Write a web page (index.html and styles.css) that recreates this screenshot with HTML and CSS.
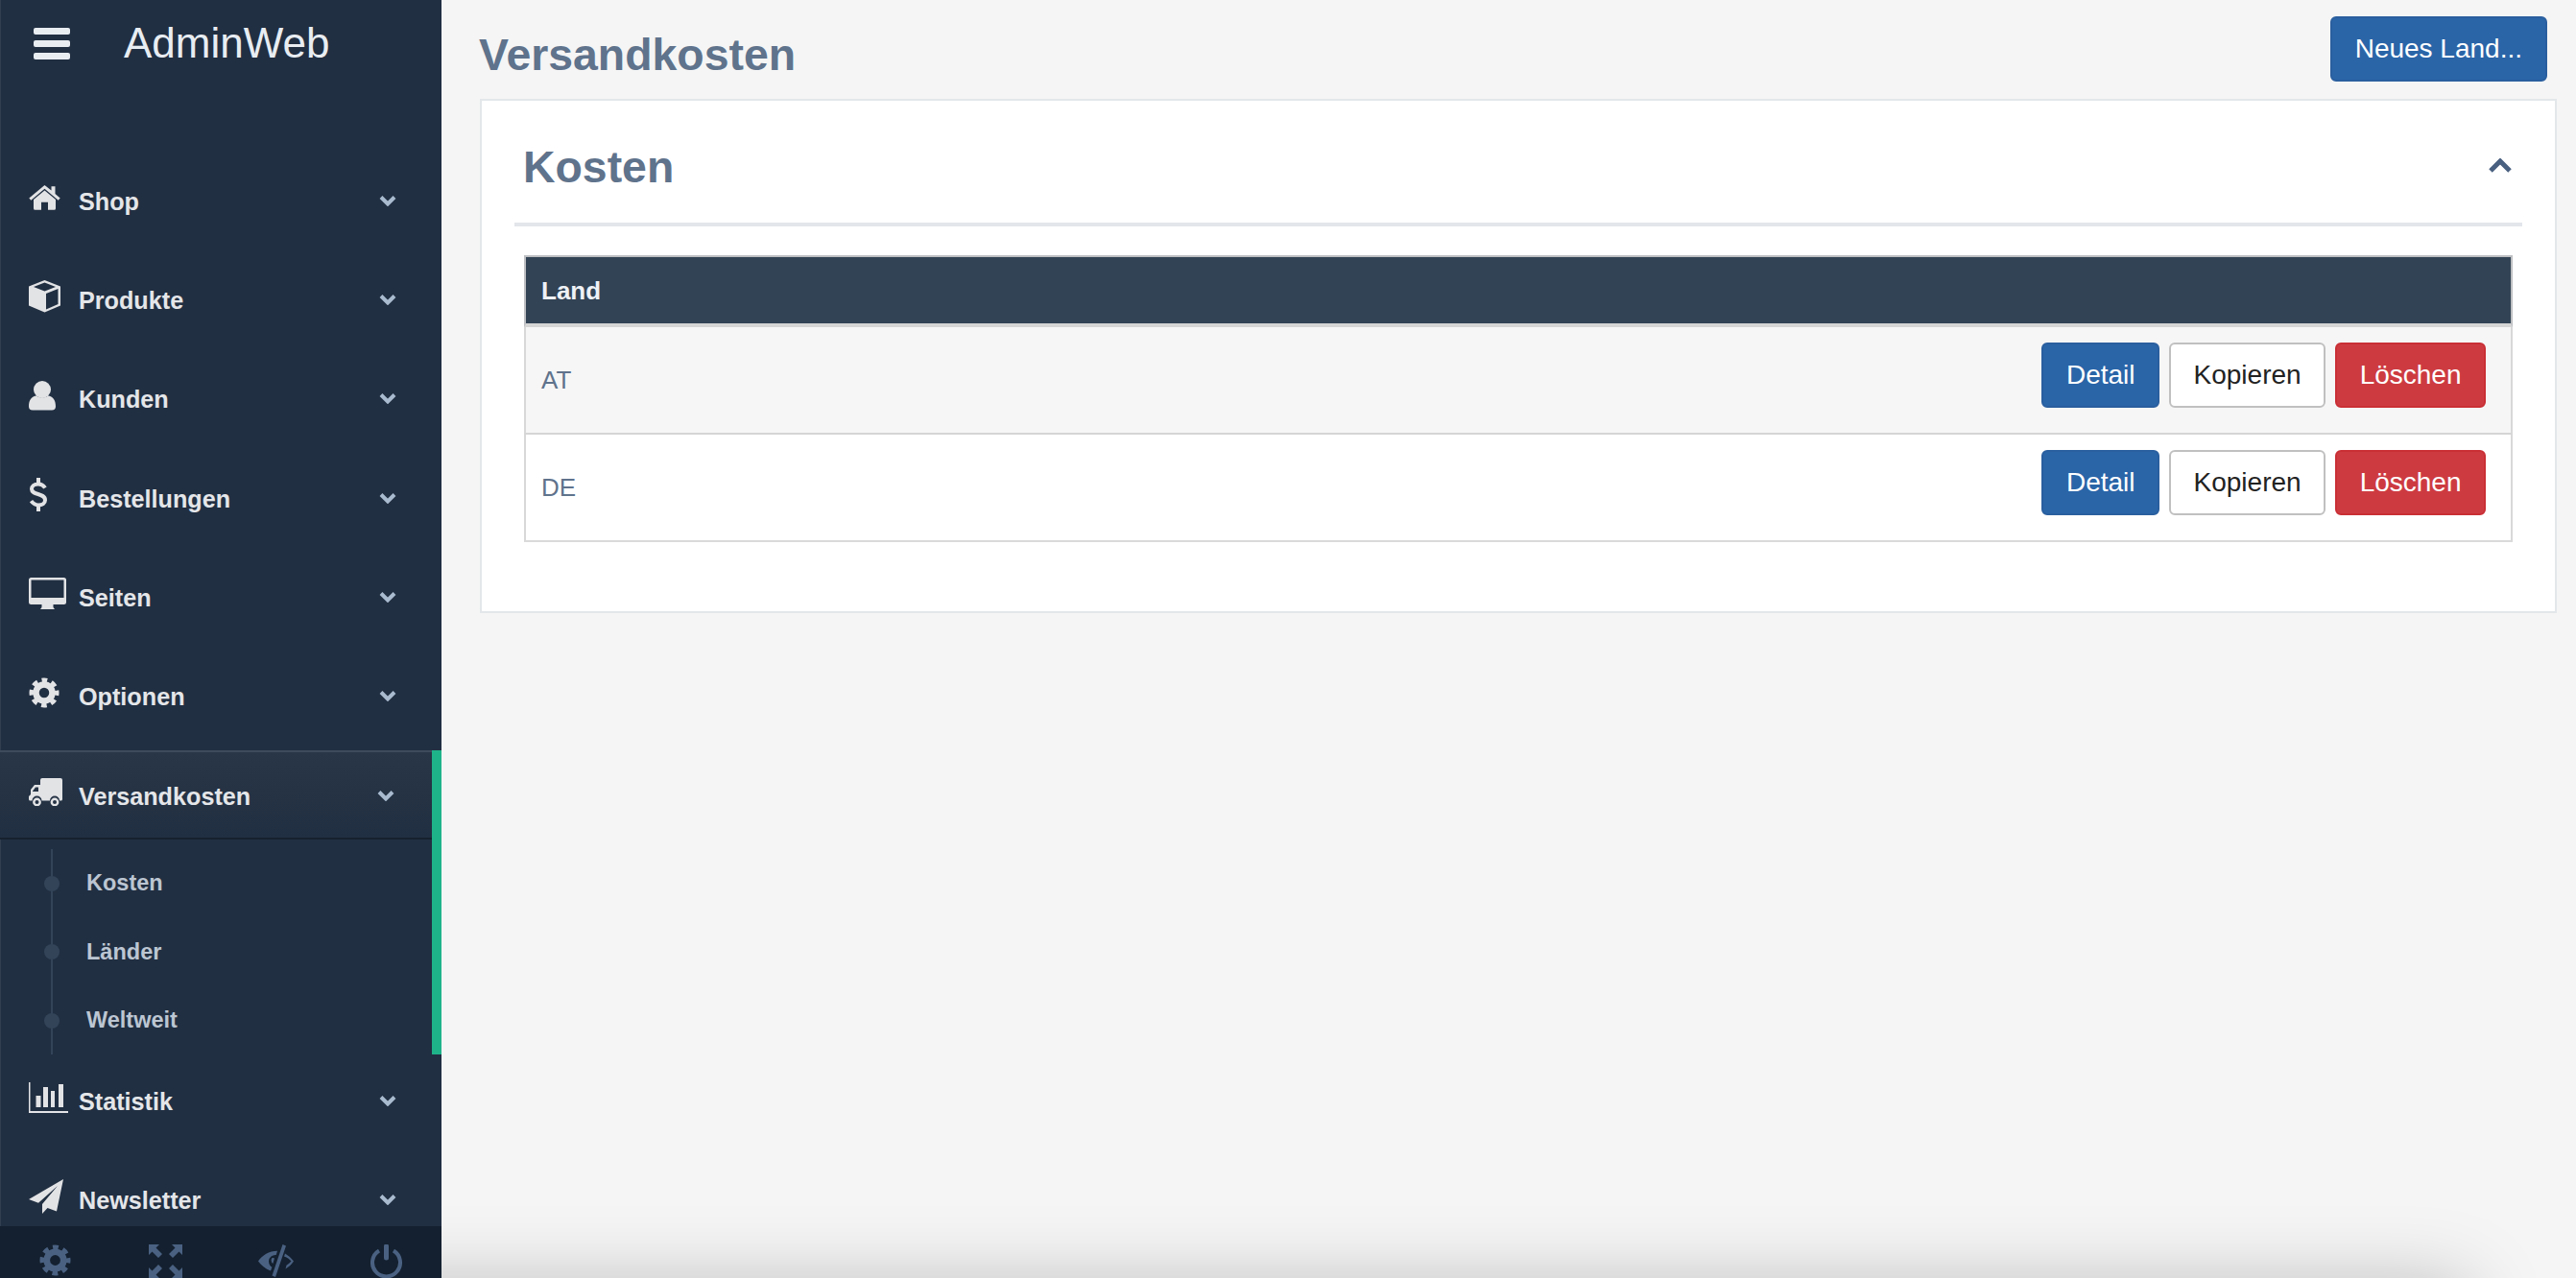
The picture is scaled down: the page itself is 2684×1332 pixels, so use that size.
FILE: index.html
```html
<!DOCTYPE html>
<html lang="de">
<head>
<meta charset="utf-8">
<title>AdminWeb - Versandkosten</title>
<link rel="stylesheet" href="styles.css">
</head>
<body>
<svg class="defs" width="0" height="0" aria-hidden="true">
  <symbol id="gear" viewBox="0 0 32 32">
    <circle class="gear-ring" cx="16" cy="16" r="8.5"/>
    <circle class="gear-teeth" cx="16" cy="16" r="13"/>
  </symbol>
  <symbol id="chev" viewBox="0 0 18 12">
    <path class="chev-line" d="M2 2.5 9 9.500 16 2.500"/>
  </symbol>
</svg>
<div class="app">
  <aside class="sidebar">
    <div class="brand">
      <div class="burger"><span></span><span></span><span></span></div>
      <div class="brand-name">AdminWeb</div>
    </div>
    <nav class="nav">
      <a class="item">
        <span class="ico"><svg width="33" height="26" viewBox="0 0 33 26"><path d="M16.5 5.5 5 15v9.2a1.5 1.5 0 0 0 1.5 1.5H13v-8h7v8h6.5a1.5 1.5 0 0 0 1.5-1.5V15Z"/><path d="M16.5 0 .3 13.5l2 2.2L16.5 3.8l14.2 11.9 2-2.2L27.5 9V1.2h-4v4.4Z"/></svg></span>
        <span class="label">Shop</span>
        <svg class="chev" width="18" height="12"><use href="#chev"/></svg>
      </a>
      <a class="item">
        <span class="ico"><svg width="33" height="34" viewBox="0 0 33 34"><path fill-rule="evenodd" d="M16.5 0 33 6.5v20L16.5 33.6 0 26.5v-20ZM16.5 2.6 5 7l11.5 4.5L28 7ZM18 14v16.5l12.5-5.4V9Z"/></svg></span>
        <span class="label">Produkte</span>
        <svg class="chev" width="18" height="12"><use href="#chev"/></svg>
      </a>
      <a class="item">
        <span class="ico"><svg width="28" height="31" viewBox="0 0 28 31"><circle cx="14" cy="9" r="9"/><path d="M0 26.5C0 20 3 16 8 15.500c2 2.500 10 2.500 12 0 5 .5 8 4.500 8 11a4 4 0 0 1-4 4H4a4 4 0 0 1-4-4Z"/></svg></span>
        <span class="label">Kunden</span>
        <svg class="chev" width="18" height="12"><use href="#chev"/></svg>
      </a>
      <a class="item">
        <span class="ico"><svg width="20" height="37" viewBox="0 0 20 37"><path class="dollar" d="M17 11.500C15 8.500 12.500 7.500 10 7.500 5.500 7.500 3 10 3 12.800 3 19.500 17 16.500 17 24.200 17 27.500 14 29.500 10 29.500 7 29.500 4.500 28 2.500 25.200M10 1v6M10 30v6"/></svg></span>
        <span class="label">Bestellungen</span>
        <svg class="chev" width="18" height="12"><use href="#chev"/></svg>
      </a>
      <a class="item">
        <span class="ico"><svg width="39" height="33" viewBox="0 0 39 33"><path fill-rule="evenodd" d="M2.500 0h34A2.500 2.500 0 0 1 39 2.500v23a2.500 2.500 0 0 1-2.500 2.500h-34A2.500 2.500 0 0 1 0 25.500v-23A2.500 2.500 0 0 1 2.500 0ZM2.500 2.500V21h34V2.500Z"/><path d="M13.500 28h12v3l1.500 2H12l1.500-2Z"/></svg></span>
        <span class="label">Seiten</span>
        <svg class="chev" width="18" height="12"><use href="#chev"/></svg>
      </a>
      <a class="item">
        <span class="ico"><svg width="32" height="32"><use href="#gear"/></svg></span>
        <span class="label">Optionen</span>
        <svg class="chev" width="18" height="12"><use href="#chev"/></svg>
      </a>
      <div class="group">
        <a class="item item-open">
          <span class="ico"><svg width="35" height="29" viewBox="0 0 35 29"><path fill-rule="evenodd" d="M12 2a2 2 0 0 1 2-2h19a2 2 0 0 1 2 2v20a1.500 1.500 0 0 1-1.500 1.500H32a5 5 0 0 0-10 0h-8.500a5 5 0 0 0-10 0h-2A1.500 1.500 0 0 1 0 22v-3l2-2v-5l4-5h6ZM10 9.500H7L4 13.500v.5h6Z"/><circle class="wheel" cx="8.500" cy="25" r="3.200"/><circle class="wheel" cx="27" cy="25" r="3.200"/></svg></span>
          <span class="label">Versandkosten</span>
          <svg class="chev" width="18" height="12"><use href="#chev"/></svg>
        </a>
        <ul class="sub">
          <li class="sub-item"><span class="dot"></span>Kosten</li>
          <li class="sub-item"><span class="dot"></span>Länder</li>
          <li class="sub-item"><span class="dot"></span>Weltweit</li>
        </ul>
      </div>
      <a class="item item-after">
        <span class="ico"><svg width="41" height="32" viewBox="0 0 41 32"><path d="M0 0h1.500v30H41v2H0Z"/><path d="M7.500 14h5v12h-5ZM15 5h5v21h-5ZM23 9h4v17h-4ZM31 2h5v24h-5Z"/></svg></span>
        <span class="label">Statistik</span>
        <svg class="chev" width="18" height="12"><use href="#chev"/></svg>
      </a>
      <a class="item">
        <span class="ico"><svg width="36" height="36" viewBox="0 0 36 36"><path d="M36 0 0 21l10 3.800L30 7 14 26v10l5.500-6 9.500 3.500Z"/></svg></span>
        <span class="label">Newsletter</span>
        <svg class="chev" width="18" height="12"><use href="#chev"/></svg>
      </a>
    </nav>
    <div class="sidebar-foot">
      <span class="foot-cell"><svg width="33" height="33"><use href="#gear"/></svg></span>
      <span class="foot-cell"><svg width="35" height="35" viewBox="0 0 35 35"><path d="M0 0h11L7.500 3.500 14 10l-4 4-6.500-6.500L0 11ZM35 0v11l-3.500-3.500L25 14l-4-4 6.500-6.500L24 0ZM0 35V24l3.500 3.500L10 21l4 4-6.500 6.500L11 35ZM35 35H24l3.500-3.500L21 25l4-4 6.500 6.500L35 24Z"/></svg></span>
      <span class="foot-cell"><svg width="37" height="34" viewBox="0 0 37 34"><path fill-rule="evenodd" d="M20 6.800 18.700 11A7 7 0 0 0 11 17.500c0 2.700 1.300 5 3.400 6.300L13 27.600C7.500 25.500 3 21.500 0 17.500 4 11.500 11.500 6.800 20 6.800ZM14.500 14a4 4 0 0 0-.5 4.500c.3.500.8 1 1.300 1.400L17 14.500c-1-.7-1.800-.7-2.500-.5Z"/><path d="M25.500 0 29 1.500 18 34l-3.500-1.500ZM28 9.500c3.500 2 6.500 4.800 9 8-2 3-5 6-8.500 8l1-3.800c2-1.200 3.600-2.700 5-4.200-1.500-1.800-4-3.800-7.500-5Z"/></svg></span>
      <span class="foot-cell"><svg width="33" height="35" viewBox="0 0 33 35"><path class="eye-line" d="M9 6.500a14.500 14.500 0 1 0 15 0"/><path class="power-stem" d="M16.500 2V14"/></svg></span>
    </div>
  </aside>
  <main class="main">
    <header class="page-head">
      <h1 class="page-title">Versandkosten</h1>
      <button class="btn btn-blue btn-new">Neues Land...</button>
    </header>
    <section class="card">
      <div class="card-head">
        <h2 class="card-title">Kosten</h2>
        <svg class="chev-up" width="24" height="15" viewBox="0 0 24 15"><path d="M2 13 12 3l10 10"/></svg>
      </div>
      <table class="table">
        <thead>
          <tr><th colspan="2">Land</th></tr>
        </thead>
        <tbody>
          <tr class="odd">
            <td class="cell-name">AT</td>
            <td class="cell-actions"><div class="actions"><button class="btn btn-blue">Detail</button><button class="btn btn-white">Kopieren</button><button class="btn btn-red">Löschen</button></div></td>
          </tr>
          <tr>
            <td class="cell-name">DE</td>
            <td class="cell-actions"><div class="actions"><button class="btn btn-blue">Detail</button><button class="btn btn-white">Kopieren</button><button class="btn btn-red">Löschen</button></div></td>
          </tr>
        </tbody>
      </table>
    </section>
    <div class="bottom-shadow"></div>
  </main>
</div>
</body>
</html>
```
FILE: styles.css
```css
* { box-sizing: border-box; }
html, body { margin: 0; padding: 0; height: 100%; overflow: hidden; }
body { background: #f5f5f5; font-family: "Liberation Sans", Arial, sans-serif; }
.defs { position: absolute; }
.app { display: flex; height: 1332px; overflow: hidden; }

/* sidebar */
.sidebar {
  position: relative;
  z-index: 1;
  flex: 0 0 460px;
  height: 1332px;
  overflow: hidden;
  background: linear-gradient(90deg, #303e50 1px, #212f42 1px);
}
.brand { display: flex; align-items: center; height: 90px; padding-left: 35px; gap: 56px; margin-bottom: 62px; }
.burger { display: flex; flex-direction: column; gap: 6px; width: 38px; }
.burger span { display: block; height: 7px; border-radius: 2px; background: #e8edf2; }
.brand-name { font-size: 44px; color: #e8edf2; }

.nav { display: flex; flex-direction: column; }
.item {
  display: flex;
  align-items: center;
  height: 93px;
  margin-top: 10.3px;
  padding: 0 47px 0 30px;
  color: #e4e6e9;
}
.item-after { margin-top: 1.5px; }
.ico { flex: 0 0 52px; display: flex; margin-bottom: 6px; color: #e2e3e5; }
.ico svg { fill: #e2e3e5; display: block; }
.label { flex: 1; padding-top: 3px; font-size: 25.200px; font-weight: 700; }
.chev { display: block; }
.chev-line { fill: none; stroke: #a9bbcf; stroke-width: 4; }
.gear-ring { fill: none; stroke: currentColor; stroke-width: 6.5; }
.gear-teeth { fill: none; stroke: currentColor; stroke-width: 5; stroke-dasharray: 5.6 4.61; stroke-dashoffset: 2.8; }
.ico .dollar { fill: none; stroke: #e2e3e5; stroke-width: 4; }
.ico .wheel { fill: none; stroke: #e2e3e5; stroke-width: 2.400; }

.group { margin-top: 10.3px; border-right: 10px solid #1fb38a; }
.item-open {
  margin-top: 0;
  padding-right: 39px;
  border-top: 2px solid #3e4b5c;
  border-bottom: 2px solid #16212e;
  background: linear-gradient(180deg, #283647, #212f42);
}
.sub { position: relative; list-style: none; margin: 0; padding: 10px 0 0; height: 224px; }
.sub::before { content: ""; position: absolute; left: 53px; top: 10px; bottom: 0; width: 2px; background: #334459; }
.sub-item {
  position: relative;
  display: flex;
  align-items: center;
  height: 71.300px;
  padding-left: 90px;
  font-size: 23.500px;
  font-weight: 700;
  color: #bcc6d2;
}
.dot { position: absolute; left: 46px; top: 28px; width: 16px; height: 16px; border-radius: 50%; background: #334459; }

.sidebar-foot { position: absolute; left: 0; right: 0; bottom: 0; height: 54px; display: flex; background: #14202f; color: #4a6182; padding-top: 19px; }
.foot-cell { flex: 1; display: flex; justify-content: center; align-items: flex-start; }
.foot-cell svg { fill: #4a6182; display: block; flex: none; }
.foot-cell .eye-line { fill: none; stroke: #4a6182; stroke-width: 4; }
.foot-cell .power-stem { fill: none; stroke: #4a6182; stroke-width: 5; stroke-linecap: round; }

/* main */
.main { position: relative; flex: 1; min-width: 0; padding-right: 20px; }
.page-head { display: flex; justify-content: space-between; align-items: flex-start; height: 103px; padding: 0 10px 0 39px; }
.page-title { margin: 29px 0 0; font-size: 46.400px; line-height: 56px; font-weight: 700; color: #5f738c; }
.btn-new { margin-top: 17px; }

.btn {
  display: block;
  height: 68px;
  padding: 12px 24px;
  border: 2px solid;
  border-radius: 6px;
  font: 28px/40px "Liberation Sans", Arial, sans-serif;
}
.btn-blue { background: #2a65a8; border-color: #2a5f9f; color: #fff; }
.btn-white { background: #fff; border-color: #c0c0c0; color: #222; }
.btn-red { background: #cd3b41; border-color: #c92f35; color: #fff; }

.card { margin-left: 40px; height: 536px; background: #fff; border: 2px solid #e3e7ea; }
.card-head { display: flex; justify-content: space-between; align-items: center; height: 131px; margin: 0 34px; padding: 10px 11px 0 9px; border-bottom: 4px solid #e3e6ea; }
.card-title { margin: 0; font-size: 46.400px; line-height: 56px; font-weight: 700; color: #5f738c; }
.chev-up { display: block; margin-bottom: 2px; }
.chev-up path { fill: none; stroke: #4a6080; stroke-width: 5; }

.table { width: 2072px; margin: 30px 44px 0; border-collapse: separate; border-spacing: 0; }
.table th {
  height: 75px;
  padding: 1px 16px 0;
  background: #324355;
  border-top: 2px solid #bdbfc2;
  border-left: 2px solid #bdbfc2;
  border-right: 2px solid #bdbfc2;
  border-bottom: 4px solid #d5d5d5;
  font-size: 26px;
  font-weight: 700;
  text-align: left;
  color: #eef1f5;
}
.table td { height: 112px; border-bottom: 2px solid #dadada; }
.odd td { background: #f6f6f6; border-bottom-color: #d5d5d5; }
.cell-name { padding: 0 16px; border-left: 2px solid #d8d8d8; font-size: 26px; color: #5f738c; }
.cell-actions { padding: 16px 26px 0 0; border-right: 2px solid #d8d8d8; vertical-align: top; }
.actions { display: flex; justify-content: flex-end; gap: 10px; }
.actions .btn { padding: 12px 23.500px; }

.bottom-shadow {
  position: absolute;
  left: -300px;
  right: 114px;
  top: 1340px;
  height: 100px;
  box-shadow: 0 0 80px rgba(0, 0, 0, 0.25);
}
```
